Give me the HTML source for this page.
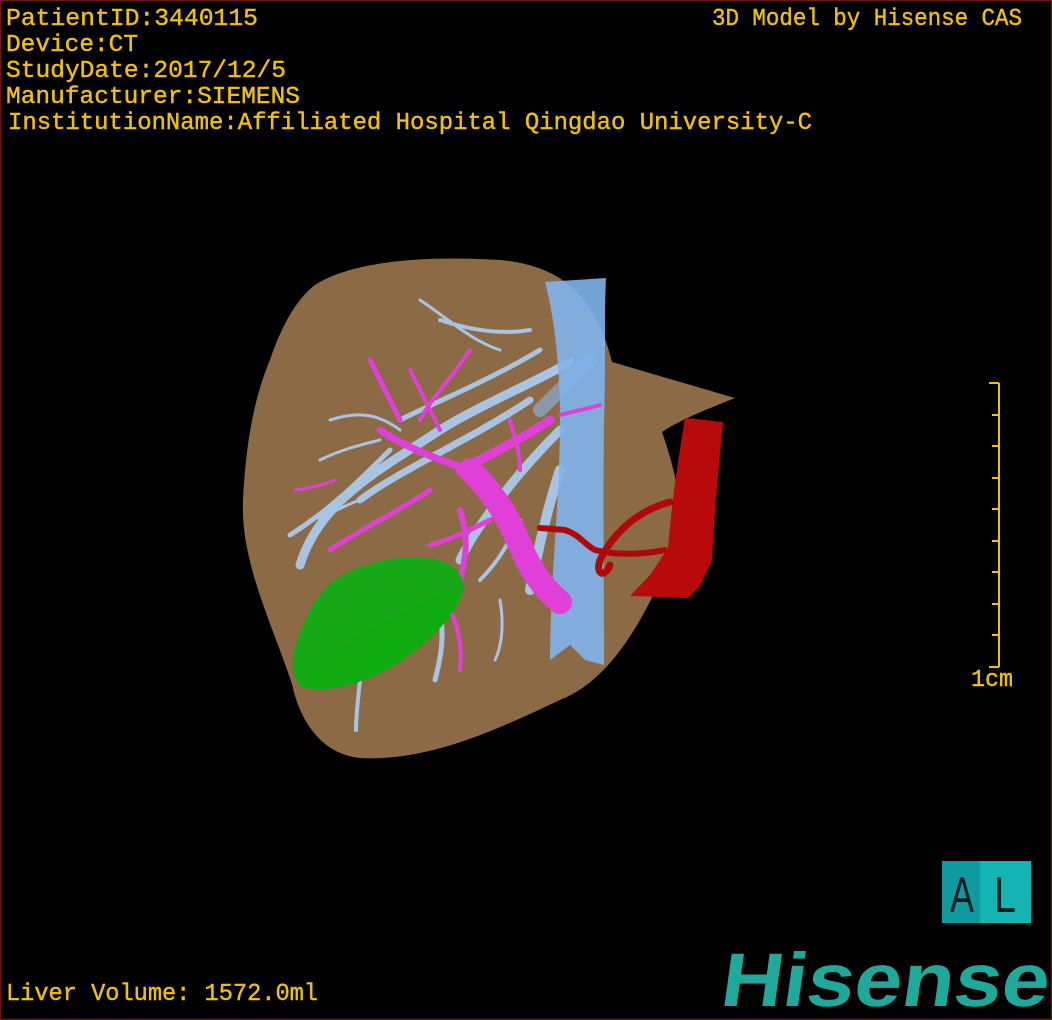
<!DOCTYPE html>
<html><head><meta charset="utf-8"><style>
html,body{margin:0;padding:0;background:#000;}
svg{display:block;}
</style></head><body>
<svg width="1052" height="1020" viewBox="0 0 1052 1020" xmlns="http://www.w3.org/2000/svg">
<rect x="0" y="0" width="1052" height="1020" fill="#000"/>
<rect x="0.5" y="0.5" width="1051" height="1019" fill="none" stroke="#6e1616" stroke-width="1.5"/>
<g font-family="Liberation Mono, monospace" font-size="24" fill="#f0c010" stroke="#f0c010" stroke-width="0.4">
<text x="6" y="25" textLength="252" lengthAdjust="spacingAndGlyphs">PatientID:3440115</text>
<text x="6" y="51" textLength="132" lengthAdjust="spacingAndGlyphs">Device:CT</text>
<text x="6" y="77" textLength="280" lengthAdjust="spacingAndGlyphs">StudyDate:2017/12/5</text>
<text x="6" y="103" textLength="294" lengthAdjust="spacingAndGlyphs">Manufacturer:SIEMENS</text>
<text x="8" y="129" textLength="804" lengthAdjust="spacingAndGlyphs">InstitutionName:Affiliated Hospital Qingdao University-C</text>
<text x="712" y="25" textLength="310" lengthAdjust="spacingAndGlyphs">3D Model by Hisense CAS</text>
<text x="6" y="1000" textLength="312" lengthAdjust="spacingAndGlyphs">Liver Volume: 1572.0ml</text>
<text x="971" y="686" textLength="42" lengthAdjust="spacingAndGlyphs">1cm</text>
</g>
<g stroke="#f0c010" stroke-width="2">
<line x1="999" y1="383" x2="999" y2="667"/>
<line x1="989" y1="383" x2="999" y2="383"/>
<line x1="992" y1="415" x2="999" y2="415"/>
<line x1="992" y1="446" x2="999" y2="446"/>
<line x1="992" y1="478" x2="999" y2="478"/>
<line x1="992" y1="509" x2="999" y2="509"/>
<line x1="992" y1="541" x2="999" y2="541"/>
<line x1="992" y1="572" x2="999" y2="572"/>
<line x1="992" y1="604" x2="999" y2="604"/>
<line x1="992" y1="635" x2="999" y2="635"/>
<line x1="989" y1="667" x2="999" y2="667"/>
</g>
<!-- liver -->
<path d="M315,285 C350,262 420,255 500,260 C555,265 595,290 612,362 L735,398 C705,410 680,420 662,432 C675,470 690,520 668,565 C640,625 610,680 560,700 C500,728 430,762 360,758 C322,754 300,722 292,684 C272,624 240,560 243,500 C246,440 255,395 270,360 C280,330 295,300 315,285 Z" fill="#8c6a46"/>
<g stroke="#a9c3e2" fill="none" stroke-linecap="round">
<path d="M300,565 C320,500 380,470 440,430 C480,405 540,380 570,362" stroke-width="9"/>
<path d="M290,535 C330,510 360,480 390,450" stroke-width="5"/>
<path d="M360,500 C400,470 470,440 530,400" stroke-width="7"/>
<path d="M400,420 C440,400 490,380 540,350" stroke-width="5"/>
<path d="M420,300 C450,320 470,340 500,350" stroke-width="3"/>
<path d="M330,420 C360,410 380,415 400,430" stroke-width="3"/>
<path d="M460,560 C480,520 520,470 560,430" stroke-width="9"/>
<path d="M530,590 C540,540 550,500 560,470" stroke-width="10"/>
<path d="M540,410 C560,390 580,370 590,360" stroke-width="14" stroke="#8a98a8"/>
<path d="M440,610 C445,640 440,660 435,680" stroke-width="5"/>
<path d="M360,680 C358,700 356,715 356,730" stroke-width="4"/>
<path d="M320,460 C340,450 360,445 380,440" stroke-width="3"/>
<path d="M440,320 C470,330 500,335 530,330" stroke-width="4"/>
<path d="M480,580 C500,560 510,540 520,520" stroke-width="4"/>
<path d="M310,520 C330,515 345,505 360,500" stroke-width="3"/>
<path d="M500,600 C505,630 500,650 495,660" stroke-width="3"/>
</g>
<path d="M545,282 L606,278 C604,320 606,360 604,420 C603,500 604,580 604,665 L585,660 L570,645 L550,660 C550,580 560,500 560,420 C560,370 555,320 545,282 Z" fill="#7fb4ec" opacity="0.9"/>
<g stroke="#e040d8" fill="none" stroke-linecap="round">
<path d="M470,470 C490,490 505,510 520,545 C530,570 545,590 560,602" stroke-width="24"/>
<path d="M460,470 C480,460 520,440 550,420" stroke-width="9"/>
<path d="M380,430 C410,450 440,460 470,470" stroke-width="7"/>
<path d="M430,490 C400,510 360,530 330,550" stroke-width="5"/>
<path d="M370,360 C380,380 390,400 400,420" stroke-width="5"/>
<path d="M410,370 C420,390 430,410 440,430" stroke-width="4"/>
<path d="M470,350 C450,380 430,400 420,420" stroke-width="4"/>
<path d="M460,510 C470,540 465,560 460,580" stroke-width="6"/>
<path d="M450,610 C460,630 462,650 460,670" stroke-width="4"/>
<path d="M510,420 C515,440 520,450 520,470" stroke-width="4"/>
<path d="M560,415 C580,410 590,408 600,405" stroke-width="4"/>
<path d="M295,490 C310,488 320,486 335,480" stroke-width="3"/>
<path d="M490,520 C470,530 450,540 430,545" stroke-width="5"/>
</g>
<path d="M300,686 C285,670 295,640 310,610 C325,580 350,565 400,558 C440,555 465,565 463,590 C455,620 420,650 390,668 C360,685 320,695 300,686 Z" fill="#16a816"/>
<path d="M300,686 C320,660 380,615 460,588 C455,620 420,650 390,668 C360,685 320,695 300,686 Z" fill="#0ead0e" opacity="0.7"/>
<path d="M685,418 L723,422 C718,470 714,520 712,560 L700,586 L688,598 L630,596 L650,575 L668,548 C672,500 678,460 685,418 Z" fill="#b80a0a"/>
<g stroke="#b00808" fill="none" stroke-linecap="round">
<path d="M670,502 C640,510 615,530 600,560 C595,575 605,578 610,565" stroke-width="7"/>
<path d="M665,550 C640,555 615,555 595,550 C585,545 580,535 565,530 L540,528" stroke-width="6"/>
</g>
<rect x="942" y="861" width="38" height="62" fill="#0f9aa0"/>
<rect x="980" y="861" width="51" height="62" fill="#15b4b4"/>
<g font-family="Liberation Sans, sans-serif" font-size="50" fill="#041c1c">
<text x="950" y="912" textLength="24" lengthAdjust="spacingAndGlyphs">A</text>
<text x="994" y="912" textLength="22" lengthAdjust="spacingAndGlyphs">L</text>
</g>
<text x="720" y="1006" font-family="Liberation Sans, sans-serif" font-weight="bold" font-size="76" fill="#1fa89c" transform="skewX(-8) translate(140,0)" textLength="328" lengthAdjust="spacingAndGlyphs">Hisense</text>
</svg>
</body></html>
